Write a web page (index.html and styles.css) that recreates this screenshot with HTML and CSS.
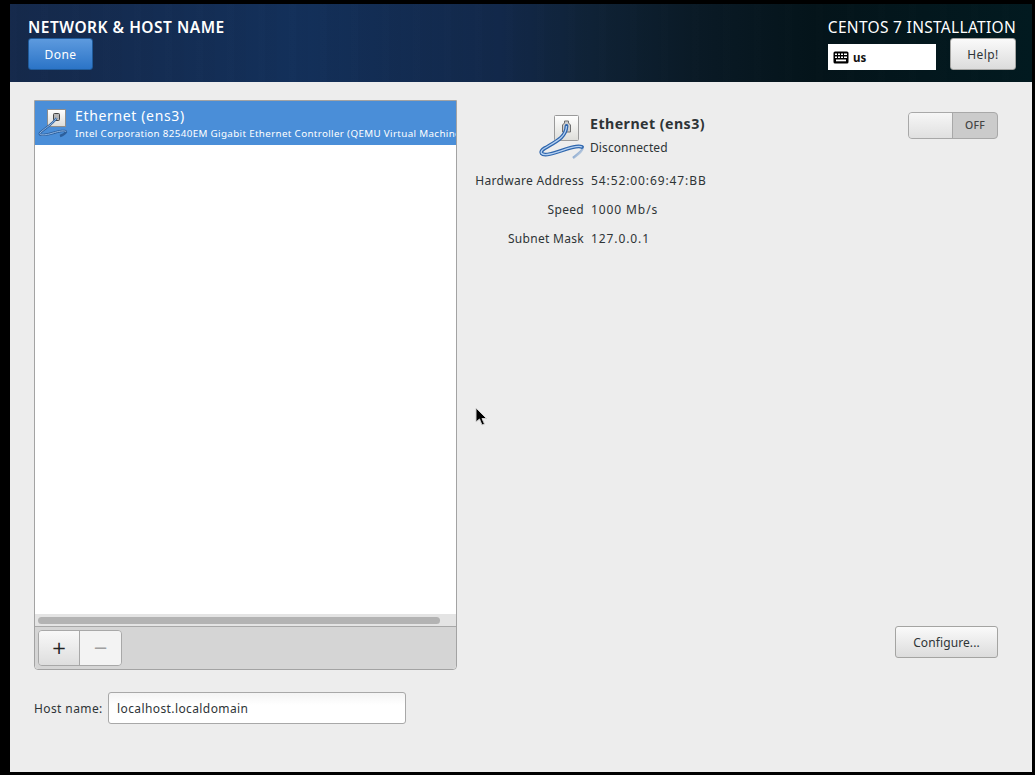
FILE: index.html
```html
<!DOCTYPE html>
<html lang="en">
<head>
<meta charset="utf-8">
<title>Network &amp; Host Name</title>
<link rel="stylesheet" href="styles.css">
</head>
<body>
<div class="window">
  <header class="topbar">
    <div class="topbar-left">
      <h1 class="title">NETWORK &amp; HOST NAME</h1>
      <button class="btn btn-done">Done</button>
    </div>
    <div class="topbar-right">
      <div class="product">CENTOS 7 INSTALLATION</div>
      <div class="topbar-controls">
        <div class="layout-box">
          <svg class="kbd-icon" width="16" height="13" viewBox="0 0 16 13"><rect x="0.5" y="0.5" width="15" height="12" rx="1.5" fill="#000"/><g fill="#fff"><rect x="2" y="2.5" width="2" height="1.5"/><rect x="5" y="2.5" width="2" height="1.5"/><rect x="8" y="2.5" width="2" height="1.5"/><rect x="11" y="2.5" width="3" height="1.5"/><rect x="2" y="5.5" width="2" height="1.5"/><rect x="5" y="5.5" width="2" height="1.5"/><rect x="8" y="5.5" width="2" height="1.5"/><rect x="11" y="5.5" width="3" height="1.5"/><rect x="3" y="8.5" width="10" height="1.8"/></g></svg>
          <span class="layout-name">us</span>
        </div>
        <button class="btn btn-help">Help!</button>
      </div>
    </div>
  </header>
  <main class="content">
    <section class="left">
      <div class="listbox">
        <div class="list-area">
          <div class="device-row">
            <svg class="device-icon" width="32" height="32" viewBox="0 0 32 32">
              <defs><linearGradient id="plate-small" x1="0" y1="0" x2="0" y2="1"><stop offset="0" stop-color="#ffffff"/><stop offset="1" stop-color="#dcdcd8"/></linearGradient></defs>
              <rect x="10.5" y="3.5" width="18" height="17" fill="url(#plate-small)" stroke="#8d8d8d"/>
              <rect x="16.5" y="7.5" width="6" height="7" rx="1" fill="#b5b5b5" stroke="#444"/>
              <path d="M19.5 12 C16 18 8 22 3 27 C1 30 10 29 16 27 C22 25 29 24 29 26 C28 28 26 29 23 30" fill="none" stroke="#2c5f9c" stroke-width="2.4"/>
              <path d="M19.5 12 C16 18 8 22 3 27 C1 30 10 29 16 27 C22 25 29 24 29 26" fill="none" stroke="#8fb6e4" stroke-width="1"/>
            </svg>
            <div class="device-text">
              <div class="device-name">Ethernet (ens3)</div>
              <div class="device-desc">Intel Corporation 82540EM Gigabit Ethernet Controller (QEMU Virtual Machine)</div>
            </div>
          </div>
        </div>
        <div class="scroll-trough"><div class="scroll-thumb"></div></div>
        <div class="list-toolbar">
          <div class="btn-group">
            <button class="tool tool-add">+</button>
            <button class="tool tool-remove">−</button>
          </div>
        </div>
      </div>
      <div class="hostname-row">
        <label class="hostname-label" for="hostname">Host name:</label>
        <input id="hostname" class="hostname-input" value="localhost.localdomain">
      </div>
    </section>
    <section class="right">
      <div class="detail-head">
        <svg class="detail-icon" width="48" height="46" viewBox="0 0 48 46">
          <defs>
            <linearGradient id="plate-big" x1="0" y1="0" x2="0" y2="1"><stop offset="0" stop-color="#ffffff"/><stop offset="1" stop-color="#dededa"/></linearGradient>
            <linearGradient id="tail" x1="0" y1="0" x2="1" y2="1"><stop offset="0" stop-color="#3f76ba"/><stop offset="1" stop-color="#3f76ba" stop-opacity="0"/></linearGradient>
          </defs>
          <rect x="16.5" y="0.5" width="24" height="25" rx="1" fill="url(#plate-big)" stroke="#9a9a9a"/>
          <path d="M24.5 17 v-7 l2 -2 v-2 h4 v2 l2 2 v7 z" fill="#cfcfcf" stroke="#6f6f6f"/>
          <path d="M28.5 11 C28 22 19 26 7 33 C0 37 3 41 12 39 C22 37 38 29 44 32" fill="none" stroke="#2f66ad" stroke-width="3.8" stroke-linecap="round"/>
          <path d="M44 32 C46 34 42 38 35 43" fill="none" stroke="url(#tail)" stroke-width="2.5"/>
          <path d="M28.5 11 C28 22 19 26 7 33 C0 37 3 41 12 39 C22 37 38 29 44 32" fill="none" stroke="#b4d0f1" stroke-width="1.3"/>
        </svg>
        <div class="detail-title">
          <div class="detail-name">Ethernet (ens3)</div>
          <div class="detail-status">Disconnected</div>
        </div>
        <div class="switch">
          <div class="switch-knob"></div>
          <div class="switch-label">OFF</div>
        </div>
      </div>
      <dl class="props">
        <dt>Hardware Address</dt><dd>54:52:00:69:47:BB</dd>
        <dt>Speed</dt><dd>1000 Mb/s</dd>
        <dt>Subnet Mask</dt><dd>127.0.0.1</dd>
      </dl>
      <div class="configure-row">
        <button class="btn btn-configure">Configure...</button>
      </div>
    </section>
    <svg class="cursor" width="14" height="20" viewBox="0 0 14 20"><path d="M1 1 L1 15 L4.5 12 L7 18 L9.5 17 L7 11.5 L11.5 11.5 Z" fill="#000" stroke="#d0d0d0" stroke-width="1"/></svg>
  </main>
</div>
</body>
</html>
```

FILE: styles.css
```css
* { box-sizing: border-box; }
html, body { margin: 0; height: 100%; }
body {
  background: #000;
  font-family: "Noto Sans", "Open Sans", sans-serif;
  font-size: 12px;
  color: #2e3436;
  overflow: hidden;
}
.window {
  height: 775px;
  padding: 4px 3px 3px 10px;
  display: flex;
  flex-direction: column;
}
.topbar {
  height: 78px;
  flex: none;
  padding: 13px 16px 0 18px;
  display: flex;
  justify-content: space-between;
  background:
    repeating-linear-gradient(90deg, rgba(255,255,255,0.004) 0 7px, rgba(0,0,0,0.01) 7px 19px, rgba(255,255,255,0) 19px 31px),
    linear-gradient(90deg, #15294b 0%, #13305a 28%, #12284a 48%, #0f2236 57%, #0a1a26 67%, #04141a 79%, #021a20 100%);
}
.title {
  margin: 0;
  font-size: 15.5px;
  line-height: 20px;
  font-weight: 600;
  letter-spacing: 0.5px;
  color: #fff;
}
.btn {
  font-family: inherit;
  font-size: 12px;
  letter-spacing: 0.4px;
  color: #2e3436;
  border: 1px solid #a4a4a2;
  border-radius: 3px;
  background: linear-gradient(#fafafa, #dcdcdc);
  padding: 0;
}
.btn-done {
  display: block;
  width: 65px;
  height: 32px;
  margin-top: 1px;
  color: #fff;
  border-color: #1f5a99;
  background: linear-gradient(#5d9ade, #2b74c7);
}
.topbar-right {
  display: flex;
  flex-direction: column;
  align-items: flex-end;
}
.product {
  font-size: 15.5px;
  line-height: 20px;
  letter-spacing: 0.3px;
  color: #fff;
}
.topbar-controls {
  display: flex;
  align-items: flex-end;
  gap: 14px;
  margin-top: 1px;
}
.layout-box {
  width: 108px;
  height: 26px;
  background: #fff;
  padding-left: 5px;
  display: flex;
  align-items: center;
  gap: 4px;
  color: #000;
}
.layout-name { font-size: 11.5px; font-weight: 700; color: #111; }
.btn-help { width: 66px; height: 32px; }
.content {
  flex: 1;
  position: relative;
  background: #ededed;
  padding: 18px 34px 0 24px;
  display: flex;
}
.left {
  width: 423px;
  flex: none;
  display: flex;
  flex-direction: column;
}
.listbox {
  height: 570px;
  display: flex;
  flex-direction: column;
  border: 1px solid #a3a3a3;
  border-radius: 0 0 4px 4px;
  background: #fff;
}
.list-area { flex: 1; min-height: 0; overflow: hidden; }
.device-row {
  height: 44px;
  background: #4a8ed8;
  color: #fff;
  display: flex;
  overflow: hidden;
  padding: 5px 0 0 2px;
}
.device-icon { flex: none; }
.device-text { margin-left: 6px; white-space: nowrap; }
.device-name { font-size: 14px; line-height: 20px; letter-spacing: 0.65px; }
.device-desc { font-size: 9.8px; line-height: 15px; letter-spacing: 0.35px; }
.scroll-trough {
  height: 13px;
  flex: none;
  padding: 3px 16px 0 3px;
  background: #e4e4e4;
  border-bottom: 1px solid #a8a8a8;
}
.scroll-thumb { height: 7px; border-radius: 4px; background: #b3b3b3; }
.list-toolbar {
  height: 42px;
  flex: none;
  padding: 3px;
  background: #d5d5d5;
  border-radius: 0 0 4px 4px;
}
.btn-group {
  width: 84px;
  height: 36px;
  display: flex;
  border: 1px solid #a8a8a8;
  border-radius: 4px;
  overflow: hidden;
}
.tool {
  border: 0;
  padding: 0;
  font-family: "DejaVu Sans", sans-serif;
  font-size: 18px;
  line-height: 1;
}
.tool-add { flex: none; width: 41px; background: linear-gradient(#f8f8f8, #dedede); color: #222; border-right: 1px solid #a8a8a8; }
.tool-remove { flex: 1; background: #f3f3f3; color: #a0a0a0; }
.hostname-row {
  margin-top: 22px;
  display: flex;
  align-items: center;
  gap: 6px;
}
.hostname-label { font-size: 12px; letter-spacing: 0.4px; color: #2e3436; width: 68px; white-space: nowrap; }
.hostname-input {
  width: 298px;
  height: 32px;
  border: 1px solid #a8a8a8;
  border-radius: 3px;
  background: linear-gradient(#f4f4f4, #fff 40%);
  padding: 0 8px;
  font-family: inherit;
  font-size: 12px;
  letter-spacing: 0.4px;
  color: #2e3436;
}
.right {
  flex: 1;
  display: flex;
  flex-direction: column;
  padding-left: 18px;
  min-width: 0;
}
.detail-head {
  display: flex;
  align-items: flex-start;
  padding: 12px 0 0 63px;
}
.detail-icon { flex: none; margin-top: 3px; }
.detail-title { margin-left: 4px; flex: 1; margin-top: 2px; }
.detail-name { font-size: 14.2px; line-height: 20px; font-weight: 700; letter-spacing: 0.45px; }
.detail-status { font-size: 12px; line-height: 16px; margin-top: 6px; letter-spacing: 0.1px; }
.switch {
  width: 90px;
  height: 27px;
  display: flex;
  border: 1px solid #a8a8a8;
  border-radius: 4px;
  background: #cbcbcb;
  overflow: hidden;
}
.switch-knob {
  width: 44px;
  background: linear-gradient(#f6f6f6, #e0e0e0);
  border-right: 1px solid #a8a8a8;
}
.switch-label { flex: 1; text-align: center; font-size: 10.5px; font-weight: 500; letter-spacing: 0.3px; line-height: 25px; color: #444; }
.props {
  margin: 12px 0 0;
  display: grid;
  grid-template-columns: 109px auto;
  justify-content: start;
  column-gap: 7px;
  row-gap: 13px;
  line-height: 16px;
  letter-spacing: 0.3px;
}
.props dt { text-align: right; white-space: nowrap; }
.props dd { margin: 0; white-space: nowrap; letter-spacing: 0.9px; }
.configure-row {
  margin-top: auto;
  display: flex;
  justify-content: flex-end;
  padding-bottom: 114px;
}
.btn-configure { width: 103px; height: 32px; letter-spacing: 0.1px; }
.cursor { position: absolute; left: 465px; top: 325px; }
```
